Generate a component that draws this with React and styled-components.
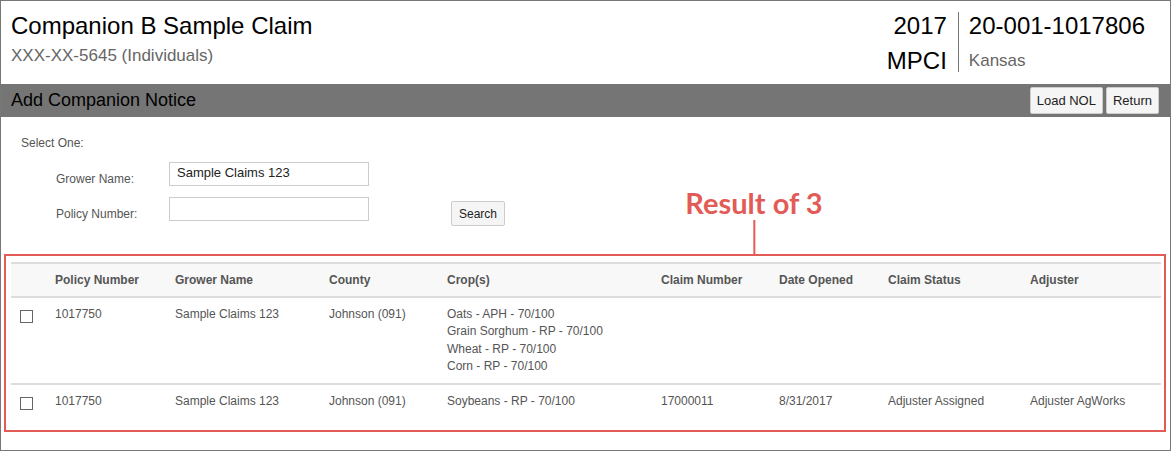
import React from "react";
import styled, { createGlobalStyle } from "styled-components";

const GlobalStyle = createGlobalStyle`
  html, body {
    margin: 0;
    padding: 0;
    background: #fff;
    font-family: "Liberation Sans", Arial, sans-serif;
  }
  * { box-sizing: border-box; }
`;

const rows = [
  {
    policy: "1017750",
    grower: "Sample Claims 123",
    county: "Johnson (091)",
    crops: [
      "Oats - APH - 70/100",
      "Grain Sorghum - RP - 70/100",
      "Wheat - RP - 70/100",
      "Corn - RP - 70/100",
    ],
    claim: "",
    opened: "",
    status: "",
    adjuster: "",
  },
  {
    policy: "1017750",
    grower: "Sample Claims 123",
    county: "Johnson (091)",
    crops: ["Soybeans - RP - 70/100"],
    claim: "17000011",
    opened: "8/31/2017",
    status: "Adjuster Assigned",
    adjuster: "Adjuster AgWorks",
  },
];

const columns = [
  { label: "", width: 44 },
  { label: "Policy Number", width: 120 },
  { label: "Grower Name", width: 154 },
  { label: "County", width: 118 },
  { label: "Crop(s)", width: 214 },
  { label: "Claim Number", width: 118 },
  { label: "Date Opened", width: 109 },
  { label: "Claim Status", width: 142 },
  { label: "Adjuster", width: 131 },
];

const App = () => (
  <>
    <GlobalStyle />
    <Frame>
      <Header>
        <ClaimTitle>
          <Title>Companion B Sample Claim</Title>
          <SubTitle>XXX-XX-5645 (Individuals)</SubTitle>
        </ClaimTitle>
        <ClaimMeta>
          <MetaCol align="right">
            <Title>2017</Title>
            <Title>MPCI</Title>
          </MetaCol>
          <MetaCol divider>
            <Title>20-001-1017806</Title>
            <SubTitle>Kansas</SubTitle>
          </MetaCol>
        </ClaimMeta>
      </Header>

      <Bar>
        <BarTitle>Add Companion Notice</BarTitle>
        <BarActions>
          <Button>Load NOL</Button>
          <Button>Return</Button>
        </BarActions>
      </Bar>

      <Content>
        <SelectLabel>Select One:</SelectLabel>
        <FormGrid>
          <FieldLabel>Grower Name:</FieldLabel>
          <Input defaultValue="Sample Claims 123" />
          <span />
          <FieldLabel>Policy Number:</FieldLabel>
          <Input defaultValue="" />
          <SearchButton>Search</SearchButton>
        </FormGrid>

        <ResultsBox>
          <Callout>
            <CalloutText>Result of 3</CalloutText>
            <CalloutLine />
          </Callout>
          <Table>
            <colgroup>
              {columns.map((c, i) => (
                <col key={i} style={{ width: c.width }} />
              ))}
            </colgroup>
            <thead>
              <tr>
                {columns.map((c, i) => (
                  <Th key={i}>{c.label}</Th>
                ))}
              </tr>
            </thead>
            <tbody>
              {rows.map((r, i) => (
                <Tr key={i} last={i === rows.length - 1}>
                  <Td>
                    <Check />
                  </Td>
                  <Td>{r.policy}</Td>
                  <Td>{r.grower}</Td>
                  <Td>{r.county}</Td>
                  <Td>
                    {r.crops.map((c) => (
                      <div key={c}>{c}</div>
                    ))}
                  </Td>
                  <Td>{r.claim}</Td>
                  <Td>{r.opened}</Td>
                  <Td>{r.status}</Td>
                  <Td>{r.adjuster}</Td>
                </Tr>
              ))}
            </tbody>
          </Table>
        </ResultsBox>
      </Content>
    </Frame>
  </>
);

export default App;

const Frame = styled.div`
  width: 1171px;
  height: 451px;
  border: 1px solid #777;
  background: #fff;
  overflow: hidden;
`;

const Header = styled.div`
  display: flex;
  justify-content: space-between;
  height: 83px;
  padding: 11px 25px 0 10px;
`;

const ClaimTitle = styled.div`
  display: flex;
  flex-direction: column;
`;

const Title = styled.div`
  font-size: 24px;
  line-height: 27px;
  color: #000;
  & + & {
    margin-top: 8px;
  }
`;

const SubTitle = styled.div`
  font-size: 17px;
  line-height: 20px;
  color: #666;
  margin-top: 7px;
`;

const ClaimMeta = styled.div`
  display: flex;
  align-items: stretch;
`;

const MetaCol = styled.div`
  display: flex;
  flex-direction: column;
  text-align: ${(p) => p.align || "left"};
  padding: 0 ${(p) => (p.divider ? 0 : 11)}px 0 ${(p) => (p.divider ? 10 : 0)}px;
  border-left: ${(p) => (p.divider ? "1px solid #777" : "none")};
  height: 60px;
  ${SubTitle} {
    margin-top: 12px;
  }
`;

const Bar = styled.div`
  display: flex;
  align-items: center;
  justify-content: space-between;
  height: 33px;
  background: #757575;
  padding: 0 11px 0 10px;
`;

const BarTitle = styled.div`
  font-size: 18px;
  color: #000;
`;

const BarActions = styled.div`
  display: flex;
  gap: 3px;
`;

const Button = styled.button`
  font-family: "Liberation Sans", Arial, sans-serif;
  font-size: 13px;
  color: #222;
  height: 27px;
  padding: 0 6px;
  background: #f5f5f5;
  border: 1px solid #ccc;
  border-radius: 2px;
`;

const Content = styled.div`
  padding: 19px 0 0 0;
`;

const SelectLabel = styled.div`
  font-size: 12px;
  color: #555;
  padding-left: 20px;
`;

const FormGrid = styled.div`
  display: grid;
  grid-template-columns: 113px 282px auto;
  row-gap: 11px;
  align-items: center;
  padding: 12px 0 0 55px;
`;

const FieldLabel = styled.div`
  font-size: 12px;
  color: #555;
  padding-top: 9px;
`;

const Input = styled.input`
  font-family: "Liberation Sans", Arial, sans-serif;
  font-size: 13px;
  color: #222;
  width: 200px;
  height: 24px;
  border: 1px solid #ccc;
  padding: 0 7px 4px;
  outline: none;
`;

const SearchButton = styled(Button)`
  font-size: 12px;
  height: 25px;
  padding: 0 7px;
  align-self: end;
  margin-bottom: -5px;
  justify-self: start;
`;

const ResultsBox = styled.div`
  position: relative;
  margin: 33px 4px 0 3px;
  border: 2px solid #e35b57;
  padding: 6px 3px 13px 5px;
`;

const Callout = styled.div`
  position: absolute;
  left: 748px;
  bottom: 100%;
  display: flex;
  flex-direction: column;
  align-items: center;
  transform: translateX(-50%);
`;

const CalloutText = styled.div`
  font-family: Lato, "Open Sans", sans-serif;
  font-weight: 700;
  font-size: 29px;
  line-height: 30px;
  color: #e35b57;
  white-space: nowrap;
`;

const CalloutLine = styled.div`
  width: 2px;
  height: 36px;
  margin-top: 2px;
  background: #e35b57;
`;

const Table = styled.table`
  width: 100%;
  border-collapse: collapse;
  table-layout: fixed;
  font-size: 12px;
  color: #555;
`;

const Th = styled.th`
  text-align: left;
  font-weight: 700;
  height: 34px;
  padding: 0;
  background: #f8f8f8;
  border-top: 2px solid #ddd;
  border-bottom: 2px solid #ddd;
  color: #555;
`;

const Tr = styled.tr`
  border-bottom: ${(p) => (p.last ? "none" : "2px solid #ddd")};
`;

const Td = styled.td`
  vertical-align: top;
  padding: 8px 0 7px;
  line-height: 17.4px;
  &:first-child {
    padding-left: 9px;
  }
`;

const Check = styled.div`
  width: 13px;
  height: 13px;
  margin-top: 4px;
  border: 1px solid #666;
  background: #fff;
`;
